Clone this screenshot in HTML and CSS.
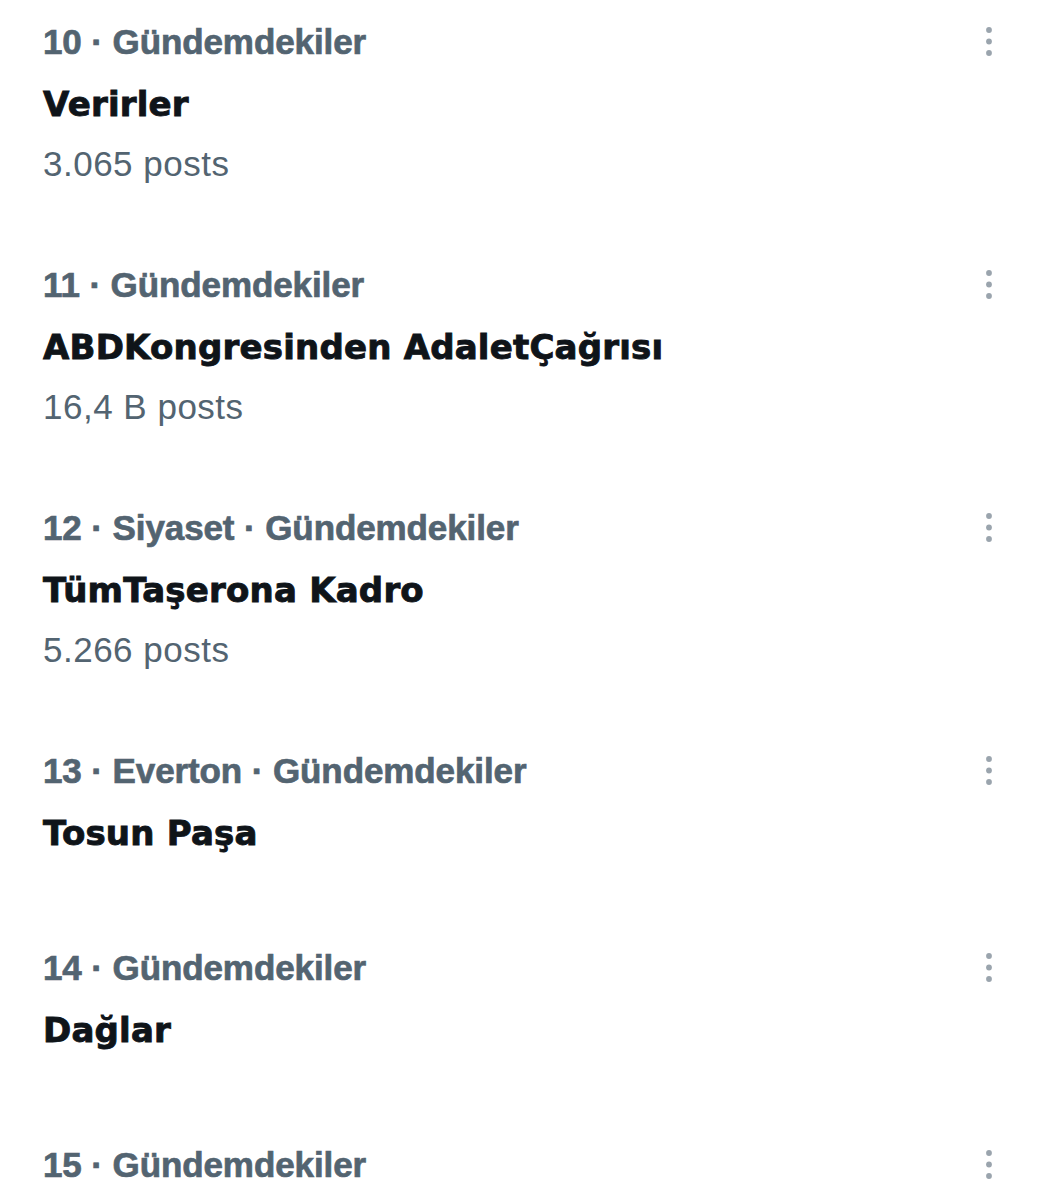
FILE: index.html
```html
<!DOCTYPE html>
<html lang="tr">
<head>
<meta charset="utf-8">
<title>Gündemdekiler</title>
<link rel="stylesheet" href="styles.css">
</head>
<body>
<main class="trends">
  <section class="trend">
    <div class="trend__body">
      <div class="trend__meta">10 · Gündemdekiler</div>
      <div class="trend__title">Verirler</div>
      <div class="trend__count">3.065 posts</div>
    </div>
    <svg class="trend__more" viewBox="0 0 12 36" aria-hidden="true"><circle cx="6" cy="6" r="2.9"/><circle cx="6" cy="17.5" r="2.9"/><circle cx="6" cy="29" r="2.9"/></svg>
  </section>
  <section class="trend">
    <div class="trend__body">
      <div class="trend__meta">11 · Gündemdekiler</div>
      <div class="trend__title">ABDKongresinden AdaletÇağrısı</div>
      <div class="trend__count">16,4 B posts</div>
    </div>
    <svg class="trend__more" viewBox="0 0 12 36" aria-hidden="true"><circle cx="6" cy="6" r="2.9"/><circle cx="6" cy="17.5" r="2.9"/><circle cx="6" cy="29" r="2.9"/></svg>
  </section>
  <section class="trend">
    <div class="trend__body">
      <div class="trend__meta">12 · Siyaset · Gündemdekiler</div>
      <div class="trend__title">TümTaşerona Kadro</div>
      <div class="trend__count">5.266 posts</div>
    </div>
    <svg class="trend__more" viewBox="0 0 12 36" aria-hidden="true"><circle cx="6" cy="6" r="2.9"/><circle cx="6" cy="17.5" r="2.9"/><circle cx="6" cy="29" r="2.9"/></svg>
  </section>
  <section class="trend trend--no-count">
    <div class="trend__body">
      <div class="trend__meta">13 · Everton · Gündemdekiler</div>
      <div class="trend__title">Tosun Paşa</div>
    </div>
    <svg class="trend__more" viewBox="0 0 12 36" aria-hidden="true"><circle cx="6" cy="6" r="2.9"/><circle cx="6" cy="17.5" r="2.9"/><circle cx="6" cy="29" r="2.9"/></svg>
  </section>
  <section class="trend trend--no-count">
    <div class="trend__body">
      <div class="trend__meta">14 · Gündemdekiler</div>
      <div class="trend__title">Dağlar</div>
    </div>
    <svg class="trend__more" viewBox="0 0 12 36" aria-hidden="true"><circle cx="6" cy="6" r="2.9"/><circle cx="6" cy="17.5" r="2.9"/><circle cx="6" cy="29" r="2.9"/></svg>
  </section>
  <section class="trend">
    <div class="trend__body">
      <div class="trend__meta">15 · Gündemdekiler</div>
    </div>
    <svg class="trend__more" viewBox="0 0 12 36" aria-hidden="true"><circle cx="6" cy="6" r="2.9"/><circle cx="6" cy="17.5" r="2.9"/><circle cx="6" cy="29" r="2.9"/></svg>
  </section>
</main>
</body>
</html>
```
FILE: styles.css
```css
html, body {
  margin: 0;
  padding: 0;
  background: #ffffff;
}

body {
  font-family: "Liberation Sans", Arial, sans-serif;
  -webkit-font-smoothing: antialiased;
}

.trends {
  display: flex;
  flex-direction: column;
}

.trend {
  display: flex;
  align-items: flex-start;
  justify-content: space-between;
  padding: 20px 48px 57px 43px;
}

.trend--no-count {
  padding-bottom: 71px;
}

.trend__body {
  display: flex;
  flex-direction: column;
  min-width: 0;
}

.trend__meta {
  font-family: "Liberation Sans", Arial, sans-serif;
  font-weight: 700;
  font-size: 35px;
  line-height: 44px;
  color: #536471;
  letter-spacing: -0.1px;
  -webkit-text-stroke: 0.7px #536471;
}

.trend__title {
  margin-top: 18px;
  font-family: "DejaVu Sans", sans-serif;
  font-weight: 700;
  font-size: 34px;
  line-height: 44px;
  color: #0f1419;
  letter-spacing: 0.2px;
  -webkit-text-stroke: 0.9px #0f1419;
}

.trend__count {
  margin-top: 16px;
  font-family: "Liberation Sans", Arial, sans-serif;
  font-weight: 400;
  font-size: 35px;
  line-height: 44px;
  color: #536471;
  letter-spacing: 0.5px;
}

.trend__more {
  flex: none;
  width: 12px;
  height: 36px;
  margin-top: 4px;
  fill: #9aa4ad;
}
```
